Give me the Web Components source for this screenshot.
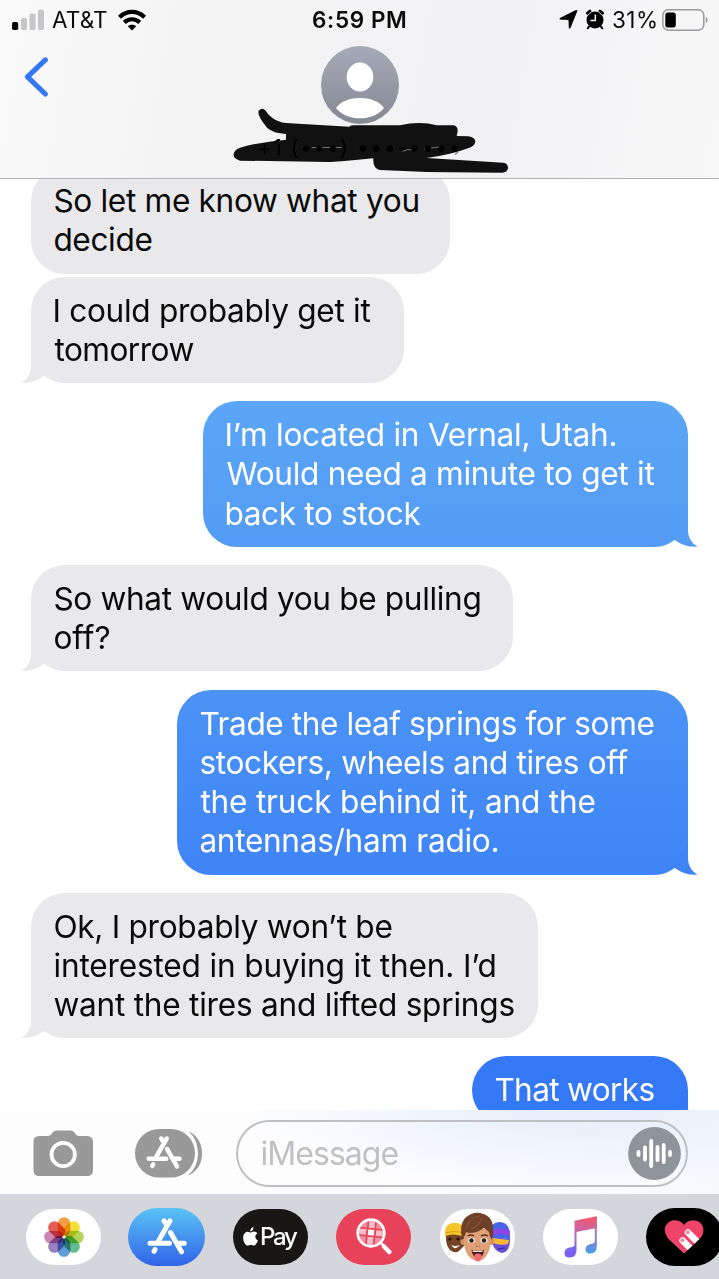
<!DOCTYPE html>
<html lang="en">
<head>
<meta charset="utf-8">
<title>Messages</title>
<style>
    :root {
        --blue: #3478f6;
        --grey-bubble: #e9e9eb;
        --icon-grey: #999999;
    }
    * { box-sizing: border-box; }
    body {
        margin: 0;
        width: 719px;
        height: 1279px;
        overflow: hidden;
        background: #fff;
        color: #0a0a0a;
        font-family: Inter, "Liberation Sans", sans-serif;
    }
</style>
</head>
<body>
<phone-screen>
    <chat-header slot="header">
        <status-bar slot="status" carrier="AT&amp;T" time="6:59 PM" battery="31"></status-bar>
    </chat-header>

    <chat-bubble width="419" stacked>
        <fit-line width="364">So let me know what you</fit-line>
        <fit-line width="97">decide</fit-line>
    </chat-bubble>
    <chat-bubble width="373" tail>
        <fit-line width="316">I could probably get it</fit-line>
        <fit-line width="139">tomorrow</fit-line>
    </chat-bubble>
    <chat-bubble width="485" tail sent style="--from: #5ba6f7; --to: #539bf4">
        <fit-line width="389">I’m located in Vernal, Utah.</fit-line>
        <fit-line width="428">Would need a minute to get it</fit-line>
        <fit-line width="194">back to stock</fit-line>
    </chat-bubble>
    <chat-bubble width="482" tail>
        <fit-line width="425">So what would you be pulling</fit-line>
        <fit-line width="55">off?</fit-line>
    </chat-bubble>
    <chat-bubble width="511" tail sent style="--from: #4b93f6; --to: #3f84f6">
        <fit-line width="453">Trade the leaf springs for some</fit-line>
        <fit-line width="428">stockers, wheels and tires off</fit-line>
        <fit-line width="394">the truck behind it, and the</fit-line>
        <fit-line width="297">antennas/ham radio.</fit-line>
    </chat-bubble>
    <chat-bubble width="507" tail>
        <fit-line width="337">Ok, I probably won’t be</fit-line>
        <fit-line width="440">interested in buying it then. I’d</fit-line>
        <fit-line width="460">want the tires and lifted springs</fit-line>
    </chat-bubble>
    <chat-bubble width="216" tail sent style="--from: #3579f6; --to: #3478f6">
        <fit-line width="159">That works</fit-line>
    </chat-bubble>

    <message-composer slot="composer" placeholder="iMessage"></message-composer>
    <app-strip slot="apps"></app-strip>
</phone-screen>

<script>
    // Base class: puts the static template() string in an open shadow root
    class BaseElement extends HTMLElement {
        connectedCallback() {
            if (this.shadowRoot) return;
            this.attachShadow({ mode: 'open' });
            this.shadowRoot.innerHTML = '<style>*{box-sizing:border-box} svg{display:block}</style>' + this.template();
            this.ready();
        }
        template() { return '<slot></slot>'; }
        ready() {}
    }

    class PhoneScreen extends BaseElement {
        template() {
            return `
            <style>
                :host {
                    display: grid;
                    grid-template-rows: 179px 931px 84px 85px;
                    width: 719px;
                    height: 1279px;
                }
                main {
                    overflow: hidden;
                    background: #fff;
                }
                .thread {
                    display: flex;
                    flex-direction: column;
                    gap: 18.1px;
                    margin-top: -12px;
                    padding: 0 31px;
                }
            </style>
            <slot name="header"></slot>
            <main><div class="thread"><slot></slot></div></main>
            <slot name="composer"></slot>
            <slot name="apps"></slot>`;
        }
    }

    // One line of text, tracked so that its ink is exactly "width" pixels wide
    class FitLine extends BaseElement {
        template() {
            return `
            <style>
                :host { display: block; white-space: nowrap; }
                span { display: inline-block; }
            </style>
            <span><slot></slot></span>`;
        }
        ready() {
            const text = this.textContent.trim();
            const cs = getComputedStyle(this);
            const ctx = document.createElement('canvas').getContext('2d');
            ctx.font = `${cs.fontWeight} ${cs.fontSize} ${cs.fontFamily}`;
            const m = ctx.measureText(text);
            const ink = m.actualBoundingBoxRight + m.actualBoundingBoxLeft;
            const gap = (Number(this.getAttribute('width')) - ink) / (text.length - 1);
            const span = this.shadowRoot.querySelector('span');
            span.style.letterSpacing = gap.toFixed(3) + 'px';
            span.style.marginLeft = m.actualBoundingBoxLeft + 'px';
            span.style.marginRight = -gap + 'px';
        }
    }

    class ChatBubble extends BaseElement {
        template() {
            const tail = this.hasAttribute('tail') ? `
                <svg class="tail" width="48" height="38" viewBox="-11 -37 48 38">
                    <path d="M0-35V-17C0-9-4-3-10-.4C-2 .3 6-2 12.5-6.6L16-9L10-16L3-26Z"/>
                </svg>` : '';
            return `
            <style>
                :host {
                    display: block;
                    position: relative;
                    z-index: 0;
                    align-self: flex-start;
                    width: ${this.getAttribute('width')}px;
                    padding: 14px 0 14px 23.4px;
                    border-radius: 34px;
                    background: var(--grey-bubble);
                    font-size: 31.6px;
                    line-height: 39.25px;
                }
                :host([stacked]) { margin-bottom: -15.1px; }
                :host([sent]) {
                    align-self: flex-end;
                    background: linear-gradient(var(--from), var(--to));
                    color: #fff;
                }
                .tail {
                    position: absolute;
                    left: -11px;
                    bottom: -1px;
                    fill: var(--grey-bubble);
                    z-index: -1;
                }
                :host([sent]) .tail {
                    left: auto;
                    right: -11px;
                    transform: scaleX(-1);
                    fill: var(--to);
                }
            </style>
            ${tail}<slot></slot>`;
        }
    }

    class StatusBar extends BaseElement {
        template() {
            return `
            <style>
                :host {
                    display: grid;
                    grid-template-columns: 1fr auto 1fr;
                    align-items: center;
                    height: 39px;
                    padding: 0 11px 0 12px;
                    font-size: 22.5px;
                    color: #0b0b0b;
                }
                .side { display: flex; align-items: center; }
                .right { justify-content: flex-end; }
                b { font-weight: 600; }
                .signal { margin-right: 8px; }
                .wifi { margin-left: 10px; }
                .alarm { margin: 0 8px 0 7px; }
                .battery { margin-left: 4px; }
            </style>
            <div class="side">
                <svg class="signal" width="32" height="22" viewBox="0 0 32 22">
                    <rect x="0" y="13" width="6.2" height="8" rx="1.8" fill="#000"/>
                    <g fill="#c6c6c8">
                        <rect x="9" y="9" width="6" height="12" rx="1.8"/>
                        <rect x="17.5" y="4.5" width="6" height="16.5" rx="1.8"/>
                        <rect x="26" y="0.5" width="6" height="20.5" rx="1.8"/>
                    </g>
                </svg>
                <fit-line width="55">${this.getAttribute('carrier').replace('&', '&amp;')}</fit-line>
                <svg class="wifi" width="28" height="22" viewBox="0 0 28 22">
                    <g fill="none" stroke="#000" stroke-width="4.2">
                        <path d="M1.4 8.2C8.6 1 19.4 1 26.6 8.2"/>
                        <path d="M6.3 13.4C10.6 9.2 17.4 9.2 21.7 13.4"/>
                    </g>
                    <path d="M9.8 17.2C12 15.2 16 15.2 18.2 17.2L14 21.6Z"/>
                </svg>
            </div>
            <b><fit-line width="93">${this.getAttribute('time')}</fit-line></b>
            <div class="side right">
                <svg width="19" height="19" viewBox="0 0 19 19">
                    <path stroke="#000" stroke-width=".8" stroke-linejoin="round" d="M18 .8L11.2 17.8Q10.5 19 10.2 17.4L9.9 9.6L1.6 9.2Q0 8.9 1.4 8.2L16.8 .5Q18.3 0 18 .8Z"/>
                </svg>
                <svg class="alarm" width="20" height="21" viewBox="0 0 20 21">
                    <circle cx="10" cy="11" r="8.5"/>
                    <g stroke="#000" stroke-linecap="round">
                        <path stroke-width="3" d="M2.4 4.2L5 2.2M17.6 4.2L15 2.2"/>
                        <path stroke-width="2" d="M4.5 17L2.7 19.3M15.5 17L17.3 19.3"/>
                    </g>
                    <path fill="none" stroke="#f6f6f7" stroke-width="1.5" d="M10.3 5.5V11.5H5.5"/>
                    <path fill="none" stroke="#f6f6f7" stroke-width=".8" d="M3.2 5.8L6.5 2.8M16.8 5.8L13.5 2.8"/>
                </svg>
                <fit-line width="43">${this.getAttribute('battery')}%</fit-line>
                <svg class="battery" width="46" height="22" viewBox="0 0 46 22">
                    <rect x=".8" y=".8" width="41" height="20.4" rx="5.5" fill="none" stroke="#9a9a9c" stroke-width="1.5"/>
                    <rect x="3.3" y="3.6" width="10.5" height="15" rx="2.8"/>
                    <path fill="#9a9a9c" d="M43.8 7.5Q45.6 8.5 45.6 11T43.8 14.5Z"/>
                </svg>
            </div>`;
        }
    }

    class ChatHeader extends BaseElement {
        template() {
            return `
            <style>
                :host {
                    display: grid;
                    grid-template-rows: 39px 1fr;
                    border-bottom: 1px solid #b4b4b7;
                    background: linear-gradient(100deg, #fafafb 0, #f3f3f4 30%, #f2f2f4 70%, #f8f8f9 100%);
                }
                .bar {
                    display: grid;
                    grid-template-columns: 234px 280px 1fr;
                }
                .back { margin: 18px 0 0 24px; }
                .contact {
                    position: relative;
                    display: flex;
                    flex-direction: column;
                    align-items: center;
                    padding: 7px 28px 0 0;
                }
                .number {
                    margin-top: 11px;
                    font-size: 21px;
                    line-height: 26px;
                    letter-spacing: 1.6px;
                    color: #000;
                    z-index: 1;
                }
                /* marker strokes lie over the contact line */
                .marker {
                    position: absolute;
                    left: -14px;
                    top: 1px;
                }
                .avatar { position: relative; z-index: 0; }
            </style>
            <slot name="status"></slot>
            <div class="bar">
                <svg class="back" width="25" height="40" viewBox="0 0 25 40">
                    <path d="M21.3 2.9L3.5 19.8L21.3 37" fill="none" stroke="#3478f6" stroke-width="5.2" stroke-linecap="round" stroke-linejoin="round"/>
                </svg>
                <div class="contact">
                    <svg class="avatar" width="78" height="78" viewBox="0 0 78 78">
                        <defs>
                            <linearGradient id="av" x2="0" y2="1">
                                <stop stop-color="#a6aab9"/><stop offset="1" stop-color="#858993"/>
                            </linearGradient>
                        </defs>
                        <circle cx="39" cy="39" r="39" fill="url(#av)"/>
                        <ellipse cx="39" cy="31" rx="13.3" ry="14.5" fill="#fff"/>
                        <path d="M15 62C20 55 29 52 39 52S58 55 63 62C57 69.5 48 72.3 39 72.3S21 69.5 15 62Z" fill="#fff"/>
                    </svg>
                    <svg class="marker" width="300" height="145" viewBox="0 0 900 435">
                        <path fill="#111" d="M116 212Q126 200 137 212Q160 248 210 250L388 260Q392 256 400 256L540 256Q600 242 650 256L700 256Q714 258 713 274L710 288L745 289Q766 292 766 306Q764 320 740 326Q690 344 620 354L850 368Q864 370 864 384Q862 398 846 398L620 396L480 390Q458 386 460 355Q400 362 330 366L60 362Q40 356 41 342Q42 330 60 323Q120 306 198 299L198 282Q160 280 142 264Q110 226 116 212Z"/>
                        <path fill="none" stroke="#777" stroke-width="3" d="M275 323L365 322M548 334Q560 326 582 330M612 327L664 320"/>
                        <path fill="none" stroke="#888" stroke-width="4" d="M705 344L716 334"/>
                    </svg>
                    <div class="number">+1 (•••) •••-••••</div>
                </div>
            </div>`;
        }
    }

    // Shared "A" made of three rods, 40 units wide
    const STORE_A = `
        <g fill="none" stroke="#fff" stroke-width="5" stroke-linecap="round">
            <path d="M17 2.8L20 7.5M23 2.8L11.5 23M3 25.3H22.5M31 25.3H37.3M23.5 14.5L34.5 33.8M8 31.5L7 33.3"/>
        </g>`;

    class MessageComposer extends BaseElement {
        template() {
            return `
            <style>
                :host {
                    display: flex;
                    align-items: flex-start;
                    background:
                        radial-gradient(ellipse 340px 75px at 580px 0, #e6eefb, rgba(230, 238, 251, 0)),
                        linear-gradient(90deg, #fdfdfe 50%, #f7f9fd);
                }
                .camera { margin: 20px 0 0 33px; }
                .apps { margin: 19px 0 0 41px; }
                .field {
                    display: flex;
                    align-items: center;
                    justify-content: space-between;
                    width: 452px;
                    height: 67px;
                    margin: 10px 0 0 33px;
                    padding: 0 5px 0 23.5px;
                    border: 2px solid #bfc0c3;
                    border-radius: 34px;
                    font-size: 32px;
                    color: #c0c0c3;
                }
            </style>
            <svg class="camera" width="61" height="47" viewBox="0 0 61 47">
                <path fill="#999" d="M6 6H15Q17 6 18.5 4L20 2Q21.2 .5 23.5 .5H37.5Q39.8 .5 41 2L42.5 4Q44 6 46 6H54Q60 6 60 12V40Q60 46 54 46H6.5Q.5 46 .5 40V12Q.5 6 6 6Z"/>
                <circle cx="30.2" cy="24.5" r="11.7" fill="none" stroke="#fff" stroke-width="3.8"/>
            </svg>
            <svg class="apps" width="68" height="49" viewBox="0 0 68 49">
                <rect width="60" height="48.5" rx="24.2" fill="#999"/>
                <path fill="#999" d="M53.5 2Q67 9 67 24.5T53 46.5Q63 38 63 24.5T53.5 2Z"/>
                <g transform="translate(11 7) scale(.9)">${STORE_A}</g>
            </svg>
            <div class="field">
                <fit-line width="137">${this.getAttribute('placeholder')}</fit-line>
                <svg width="53" height="53" viewBox="0 0 53 53">
                    <circle cx="26.5" cy="26.5" r="26.4" fill="#8f949b"/>
                    <g stroke="#fff" stroke-width="3.8" stroke-linecap="round">
                        <path d="M10.5 25V28M17 20.5V32.5M23.2 14V39M29.5 20V33M35.7 18V35M42 25V28"/>
                    </g>
                </svg>
            </div>`;
        }
    }

    class AppPill extends BaseElement {
        template() {
            return `
            <style>
                :host {
                    display: flex;
                    align-items: center;
                    justify-content: center;
                    flex: none;
                    width: 75px;
                    height: 56px;
                    border-radius: 29px;
                    background: #fff;
                    overflow: hidden;
                }
                :host([large]) { width: 77px; height: 58px; margin: 0 -1px; }
            </style>
            <slot></slot>`;
        }
    }

    class AppStrip extends BaseElement {
        template() {
            const petals = ['#f2932d', '#f0dc1c', '#a9ce45', '#4fb37e', '#4a8fd0', '#8a6fb8', '#c672a8', '#e5483f']
                .map((c, i) => `<rect x="-6.3" y="-19.8" width="12.6" height="19" rx="6.3" fill="${c}" fill-opacity=".88" transform="rotate(${i * 45})"/>`)
                .join('');
            return `
            <style>
                :host {
                    display: flex;
                    align-items: center;
                    gap: 28.45px;
                    padding: 0 0 0 26px;
                    background: #d5d6dc;
                    overflow: hidden;
                }
                .petals rect { mix-blend-mode: multiply; }
                .pay {
                    display: flex;
                    align-items: center;
                    gap: 3px;
                    color: #fff;
                    font-size: 24px;
                    font-weight: 500;
                }
            </style>
            <app-pill>
                <svg width="42" height="42" viewBox="-21 -21 42 42">
                    <g class="petals">${petals}</g>
                    <circle r="1.5" fill="#fff"/>
                </svg>
            </app-pill>
            <app-pill large style="background: linear-gradient(#5bc3f5, #2f63e8)">
                <svg width="40" height="37" viewBox="0 0 40 37">${STORE_A}</svg>
            </app-pill>
            <app-pill style="background: #181716">
                <div class="pay">
                    <svg width="15" height="19" viewBox="0 0 15 19">
                        <path fill="#fff" d="M10.4 0Q10.6 3.6 7.2 4.5Q7.2 1.2 10.4 0ZM7.6 5.6C8.6 5.6 9.4 4.6 11 4.6C12.4 4.6 13.6 5.3 14.3 6.5C11.4 8.2 11.8 12.2 14.9 13.3C14 16 12.5 18.6 10.8 18.6C9.7 18.6 9.2 17.9 7.8 17.9C6.4 17.9 5.9 18.6 4.8 18.6C2.5 18.6 .2 14.4 .2 10.9C.2 7 2.3 4.7 4.7 4.7C6 4.7 6.9 5.6 7.6 5.6Z"/>
                    </svg>
                    <fit-line width="37">Pay</fit-line>
                </div>
            </app-pill>
            <app-pill style="background: #e9435b">
                <svg width="36" height="37" viewBox="0 0 36 37">
                    <defs><clipPath id="lens"><circle cx="15" cy="15" r="12"/></clipPath></defs>
                    <circle cx="15" cy="15" r="12" fill="#ef6377"/>
                    <g clip-path="url(#lens)">
                        <g transform="rotate(6 15 15)">
                            <path fill="#f8bcc4" d="M12 0H18V10H12ZM0 11.5H11V17.5H0ZM19 11.5H30V17.5H19ZM12 19H18V30H12Z"/>
                            <path fill="#fff" d="M12 11.5H18V17.5H12Z"/>
                            <path fill="#f4909f" d="M4 4H10.5V10H4ZM19.5 4H25V10H19.5ZM4 19H10.5V25H4ZM19.5 19H25V25H19.5Z"/>
                            <path fill="none" stroke="#e9435b" stroke-width="1.5" d="M11.5 1Q10 15 11.5 29M18.5 1Q20 15 18.5 29M1 10.7H29M1 18.3H29"/>
                        </g>
                    </g>
                    <circle cx="15" cy="15" r="13.3" fill="none" stroke="#fff" stroke-width="2.7"/>
                    <path d="M25 25L27.5 27.5" stroke="#fff" stroke-width="2.5"/>
                    <path d="M28 28.5L33.3 34" stroke="#fff" stroke-width="4.5" stroke-linecap="round"/>
                </svg>
            </app-pill>
            <app-pill>
                <svg width="75" height="56" viewBox="0 0 75 56">
                    <!-- left face, yellow cap -->
                    <path fill="#754426" d="M6 24Q5 36 10 41Q15 45 19 42L25 36V24Z"/>
                    <path fill="#f5c529" d="M5 27Q4 15 13 14Q23 12 26 24L22 27Q13 24 5 27Z"/>
                    <path fill="none" stroke="#d49c15" stroke-width="1.2" d="M6 24Q14 21 23 24"/>
                    <circle cx="10" cy="30" r="1.6" fill="#20120a"/><circle cx="18" cy="30" r="1.6" fill="#20120a"/>
                    <path fill="#fff" d="M11 36Q15 38 20 36Q17 40 14 39Z"/>
                    <!-- right face, blue skin and visor -->
                    <path fill="#6a4fd8" d="M51 28L70 30Q70 43 62 44Q55 43 52 34Z"/>
                    <path fill="#4763e8" d="M50 29Q48 14 59 13Q71 13 70 30Z"/>
                    <path fill="#8b45e6" d="M51 22Q60 17 70 22V27Q60 23 52 27Z"/>
                    <path fill="#f7b733" d="M52 29L69 31L68 35Q60 37 53 34Z"/>
                    <path fill="none" stroke="#3a2aa2" stroke-width="1.5" d="M58 40L65 39"/>
                    <!-- front face -->
                    <circle cx="23.5" cy="33" r="3" fill="#d98f66"/><circle cx="51" cy="33" r="3" fill="#d98f66"/>
                    <path fill="#e0a077" d="M24 23Q23 37 27 45Q32 52 37.5 52Q44 52 48 44Q52 36 51 23Q38 15 24 23Z"/>
                    <path fill="#6e4028" d="M22 30Q19 16 25 9Q32 3 40 4Q52 6 53 18Q54 25 52 31Q49 27 49 23L44 19Q34 26 26 23Q25 28 22 30Z"/>
                    <path fill="none" stroke="#8a5436" stroke-width="1.2" d="M26 19Q30 8 40 7M31 20Q39 17 42 9"/>
                    <g fill="#fff"><ellipse cx="31.5" cy="31.5" rx="3.4" ry="2.8"/><ellipse cx="44" cy="31.5" rx="3.4" ry="2.8"/></g>
                    <g fill="#2d2112"><circle cx="31.5" cy="31.5" r="2.3"/><circle cx="44" cy="31.5" r="2.3"/></g>
                    <path fill="none" stroke="#5b3320" stroke-width="1.4" d="M27.5 27Q31 25 34 27M41 27Q45 25 48 27"/>
                    <path fill="none" stroke="#c47c55" stroke-width="1.2" d="M36 37Q38 38 40 37"/>
                    <path fill="#4b1512" d="M31.5 41Q38 43 44 41Q43 49 38 49T31.5 41Z"/>
                    <path fill="#fff" d="M32.5 41.5Q38 43 43 41.5L42 43H33Z"/>
                    <path fill="#ef6b6f" d="M34.5 45.5Q38 43.5 41.5 45.5V50Q38 55 34.5 50Z"/>
                </svg>
            </app-pill>
            <app-pill>
                <svg width="34" height="42" viewBox="0 0 34 42">
                    <defs>
                        <linearGradient id="note" x1=".6" y1="0" x2=".45" y2="1">
                            <stop stop-color="#f2566b"/><stop offset=".4" stop-color="#c46bb0"/>
                            <stop offset=".75" stop-color="#7b68ee"/><stop offset="1" stop-color="#7a5cf0"/>
                        </linearGradient>
                        <linearGradient id="note2" x2="0" y2="1">
                            <stop stop-color="#e8597c"/><stop offset=".55" stop-color="#9a7ad0"/><stop offset="1" stop-color="#419fe6"/>
                        </linearGradient>
                    </defs>
                    <path fill="url(#note)" d="M10.5 4.8L32.8 .3V12L12.5 16V34Q12.5 41.5 5.5 41.5Q.5 41.5 .5 37Q.5 32.3 5.5 31.5Q10.5 31 10.5 28.5Z"/>
                    <path fill="url(#note2)" d="M32.8 .3V30.5Q32.8 37.5 26 37.5Q21.5 37.5 21.5 33.5Q21.5 29 26.5 28Q30.8 27.5 30.8 25V3Z"/>
                </svg>
            </app-pill>
            <app-pill large style="background: #000">
                <svg width="40" height="34" viewBox="0 0 40 34">
                    <defs>
                        <clipPath id="heart"><path d="M20 33.5L4 18.5Q-1 12 1.5 6Q5 0 11 .2Q17 .5 20 5Q23 .5 29 .2Q36 0 38.8 6.5Q41 13 36 18.5Z"/></clipPath>
                    </defs>
                    <g clip-path="url(#heart)">
                        <path fill="#f0436a" d="M0 0H40V34H0Z"/>
                        <g stroke="#fff" stroke-width="6.6" stroke-linecap="round">
                            <path d="M18.6 20.5L34 36M24 12.5L42 30.5"/>
                        </g>
                        <g fill="#f58aa4"><circle cx="18.4" cy="20.3" r="2"/><circle cx="23.8" cy="12.3" r="2"/></g>
                    </g>
                </svg>
            </app-pill>`;
        }
    }

    customElements.define('app-pill', AppPill);
    customElements.define('status-bar', StatusBar);
    customElements.define('chat-header', ChatHeader);
    customElements.define('chat-bubble', ChatBubble);
    customElements.define('message-composer', MessageComposer);
    customElements.define('app-strip', AppStrip);
    customElements.define('phone-screen', PhoneScreen);
    // last, as it measures with the font size its parents have set
    customElements.define('fit-line', FitLine);
</script>
</body>
</html>
